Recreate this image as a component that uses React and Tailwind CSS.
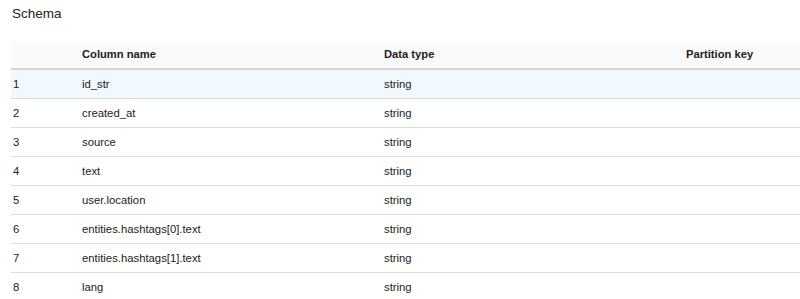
const rows = [
  "id_str",
  "created_at",
  "source",
  "text",
  "user.location",
  "entities.hashtags[0].text",
  "entities.hashtags[1].text",
  "lang",
];

export default function App() {
  return (
    <div className="w-[800px] h-[299px] bg-white overflow-hidden text-[#222] font-['Liberation_Sans',Arial,sans-serif]">
      <div className="pl-3 pt-[6px] h-[41px] text-[13.5px] leading-[16px]">Schema</div>
      <div className="ml-[11px]">
        {/* header */}
        <div className="grid grid-cols-[71px_302px_302px_1fr] h-[29px] bg-[#fafafa] border-b-2 border-[#d5d5d5] text-[11.2px] font-bold items-center">
          <div></div>
          <div>Column name</div>
          <div>Data type</div>
          <div>Partition key</div>
        </div>
        {rows.map((name, i) => (
          <div
            key={name}
            className={
              "grid grid-cols-[71px_302px_302px_1fr] h-[29px] border-b border-[#dcdcdc] text-[11.3px] items-center " +
              (i === 0 ? "bg-[#f1f8fe]" : "bg-white")
            }
          >
            <div className="pl-[2px]">{i + 1}</div>
            <div>{name}</div>
            <div>string</div>
            <div></div>
          </div>
        ))}
      </div>
    </div>
  );
}
